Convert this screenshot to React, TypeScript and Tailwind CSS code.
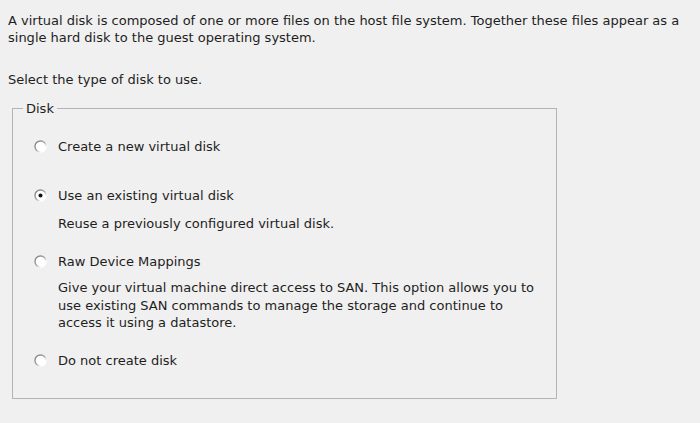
function Radio({ checked = false }: { checked?: boolean }) {
  return (
    <svg width="13" height="13" viewBox="0 0 13 13" className="shrink-0">
      <defs>
        <linearGradient id="ring" x1="0" y1="0" x2="1" y2="1">
          <stop offset="0" stopColor="#7a7a7a" />
          <stop offset="0.5" stopColor="#a8a8a8" />
          <stop offset="0.75" stopColor="#ffffff" />
        </linearGradient>
      </defs>
      <circle cx="6.5" cy="6.5" r="5.5" fill="#ffffff" stroke="url(#ring)" strokeWidth="1.4" />
      {checked && <circle cx="6.5" cy="6.5" r="2" fill="#111111" />}
    </svg>
  );
}

function Option({ label, checked }: { label: string; checked?: boolean }) {
  return (
    <div className="flex items-center gap-[11px] pl-[21px] leading-[17px]">
      <Radio checked={checked} />
      <span>{label}</span>
    </div>
  );
}

export default function App() {
  return (
    <div className="w-[700px] h-[423px] bg-[#f0f0f0] text-[#1e1e1e] text-[13px] pl-2 pt-[12px] overflow-hidden font-['DejaVu_Sans',sans-serif]">
      <p className="leading-[17px] whitespace-nowrap">
        A virtual disk is composed of one or more files on the host file system. Together these files appear as a
        <br />
        single hard disk to the guest operating system.
      </p>
      <p className="mt-[25px] leading-[17px]">Select the type of disk to use.</p>

      <fieldset className="mt-[12px] ml-[4px] w-[545px] h-[299px] border border-[#b4b4b4]">
        <legend className="ml-[10px] px-[3px] leading-[17px]">Disk</legend>
        <div className="flex flex-col pt-[21px]">
          <Option label="Create a new virtual disk" />
          <div className="mt-[32px]">
            <Option label="Use an existing virtual disk" checked />
          </div>
          <p className="mt-[11px] pl-[45px] leading-[17px]">Reuse a previously configured virtual disk.</p>
          <div className="mt-[21px]">
            <Option label="Raw Device Mappings" />
          </div>
          <p className="mt-[9px] pl-[45px] leading-[17.5px] whitespace-nowrap">
            Give your virtual machine direct access to SAN. This option allows you to
            <br />
            use existing SAN commands to manage the storage and continue to
            <br />
            access it using a datastore.
          </p>
          <div className="mt-[20px]">
            <Option label="Do not create disk" />
          </div>
        </div>
      </fieldset>
    </div>
  );
}
